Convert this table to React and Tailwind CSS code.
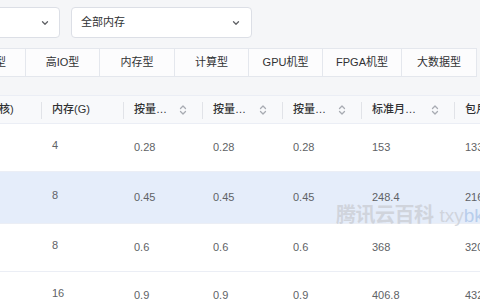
import React from "react"

const cols = [
  { w: "w-[80px]", label: "CPU(核)" },
  { w: "w-[82px]", label: "内存(G)" },
  { w: "w-[79px]", label: "按量…", sort: true },
  { w: "w-[80px]", label: "按量…", sort: true },
  { w: "w-[79px]", label: "按量…", sort: true },
  { w: "w-[93px]", label: "标准月…", sort: true },
  { w: "w-[90px]", label: "包月" },
]

const rows = [
  { h: "h-[48px]", bg: "bg-white", cells: ["", "4", "0.28", "0.28", "0.28", "153", "133."] },
  { h: "h-[52px]", bg: "bg-[#e5edfa]", cells: ["", "8", "0.45", "0.45", "0.45", "248.4", "216."] },
  { h: "h-[48px]", bg: "bg-white", cells: ["", "8", "0.6", "0.6", "0.6", "368", "320"] },
  { h: "h-[48px]", bg: "bg-white", cells: ["", "16", "0.9", "0.9", "0.9", "406.8", "432"] },
]

const tabs = [
  { w: "w-[72px]", label: "通用型" },
  { w: "w-[74px]", label: "高IO型" },
  { w: "w-[75px]", label: "内存型" },
  { w: "w-[74px]", label: "计算型" },
  { w: "w-[74px]", label: "GPU机型" },
  { w: "w-[79px]", label: "FPGA机型" },
  { w: "w-[75px]", label: "大数据型" },
]

function Chevron() {
  return (
    <svg width="10" height="10" viewBox="0 0 10 10" fill="none">
      <path d="M2.5 3.8 5 6.3 7.5 3.8" stroke="#606266" strokeWidth="1.3" strokeLinecap="round" strokeLinejoin="round" />
    </svg>
  )
}

function SortIcon() {
  return (
    <svg width="8" height="12" viewBox="0 0 8 12" fill="none">
      <path d="M1.5 4.5 4 2 6.5 4.5" stroke="#a8abb2" strokeWidth="1.3" strokeLinecap="round" strokeLinejoin="round" />
      <path d="M1.5 7.5 4 10 6.5 7.5" stroke="#a8abb2" strokeWidth="1.3" strokeLinecap="round" strokeLinejoin="round" />
    </svg>
  )
}

export default function App() {
  return (
    <div className="relative w-[480px] h-[300px] overflow-hidden bg-[#f5f6f8] font-['Liberation_Sans','Noto_Sans_CJK_SC',sans-serif] text-[11px]">
      {/* selects */}
      <div className="flex gap-[11px] pt-[7px] ml-[-120px]">
        <div className="w-[180px] h-[31px] bg-white border border-[#dcdfe6] rounded-[4px] flex items-center justify-end pr-[9px]">
          <Chevron />
        </div>
        <div className="w-[181px] h-[31px] bg-white border border-[#dcdfe6] rounded-[4px] flex items-center justify-between pl-[9px] pr-[10px] text-[#303133]">
          <span>全部内存</span>
          <Chevron />
        </div>
      </div>

      {/* tabs */}
      <div className="flex mt-[10px] ml-[-46px] h-[29px]">
        {tabs.map((t, i) => (
          <div key={i} className={`${t.w} shrink-0 bg-[#fcfcfd] border-y border-r border-[#e4e7ed] flex items-center justify-center text-[#303133] whitespace-nowrap`}>
            {t.label}
          </div>
        ))}
      </div>

      {/* table */}
      <div className="mt-[18px] ml-[-38px]">
        <div className="flex h-[29px] bg-[#f8f9fb] border-t border-b border-[#ebeef5]">
          {cols.map((c, i) => (
            <div key={i} className={`${c.w} shrink-0 relative flex items-center justify-between pl-[10px] pr-[16px] font-medium text-[#303133]`}>
              <span className="whitespace-nowrap">{c.label}</span>
              {c.sort && <SortIcon />}
              {i < cols.length - 1 && <span className="absolute right-0 top-[6px] h-[17px] w-px bg-[#e1e3e8]" />}
            </div>
          ))}
        </div>
        {rows.map((r, ri) => (
          <div key={ri} className={`flex ${r.h} ${r.bg} border-b border-[#ebeef5] text-[#606266]`}>
            {r.cells.map((v, ci) => (
              <div key={ci} className={`${cols[ci].w} shrink-0 flex items-center pl-[10px] ${ci === 1 ? "pb-[4px]" : ""}`}>
                {v}
              </div>
            ))}
          </div>
        ))}
      </div>

      {/* watermark */}
      <div className="absolute left-[336px] top-[200px] flex items-baseline gap-[6px] whitespace-nowrap pointer-events-none">
        <span className="text-[20px] font-bold text-[#c9ccd3]/75 tracking-[-0.5px]">腾讯云百科</span>
        <span className="text-[19px] text-[#c9ccd3]/75">txy<span className="text-[#b8cdec]">bk</span></span>
      </div>
    </div>
  )
}
